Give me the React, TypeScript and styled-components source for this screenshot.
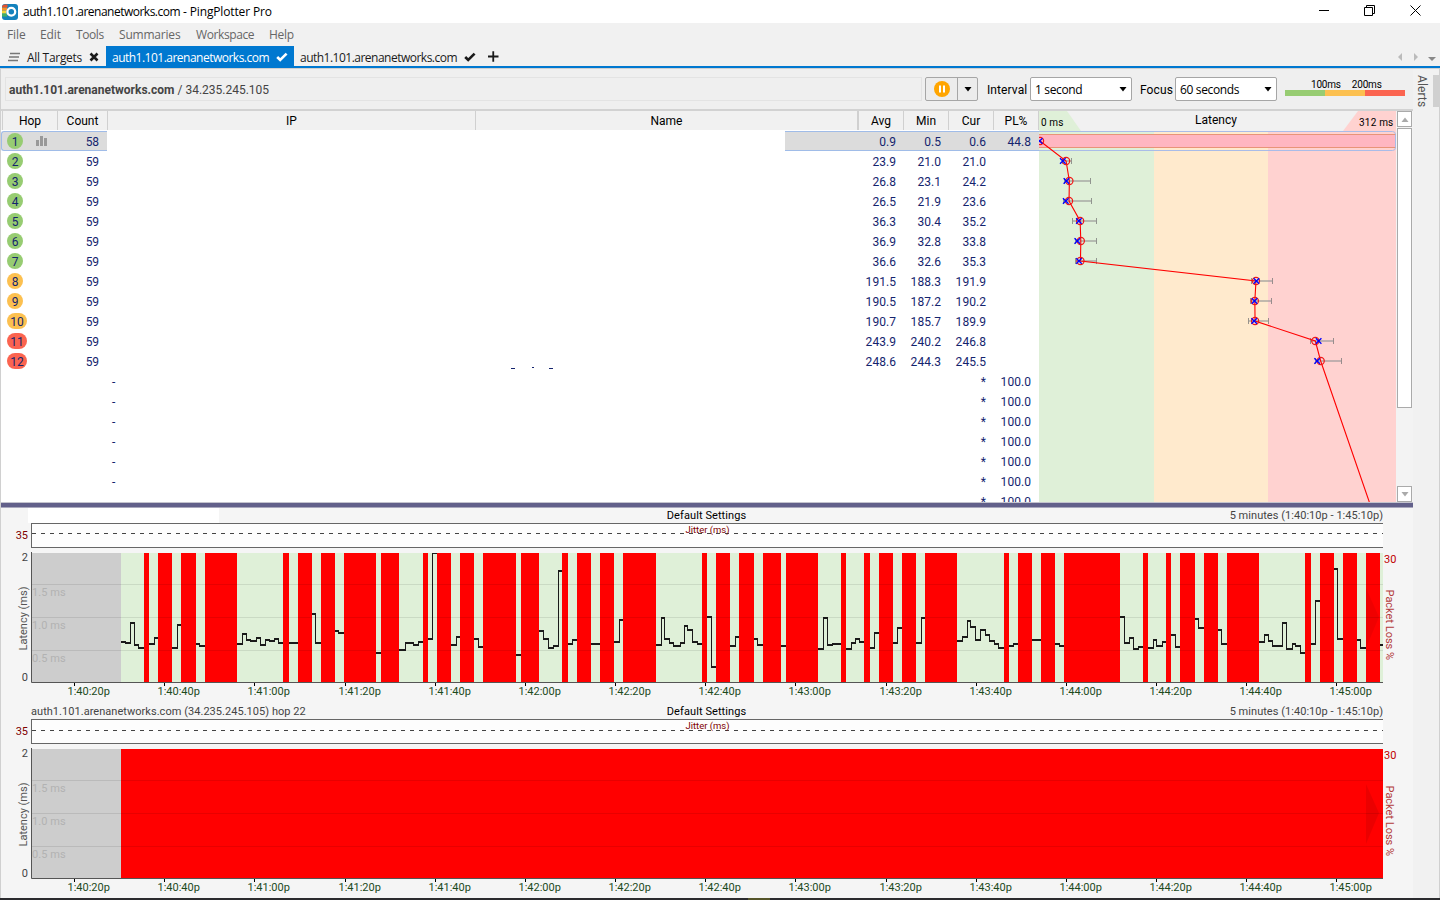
import { Fragment } from "react";
import styled, { createGlobalStyle } from "styled-components";

const GlobalStyle = createGlobalStyle`
  * {
    box-sizing: border-box;
  }
  body {
    margin: 0;
    overflow: hidden;
    font-family: Roboto, sans-serif;
    font-size: 12px;
    color: #000;
  }
  svg {
    display: block;
  }
`;

const Window = styled.div`
  width: 1440px;
  height: 900px;
  display: flex;
  flex-direction: column;
  background: #f1f1f1;
`;

const TitleBar = styled.div`
  height: 23px;
  display: flex;
  align-items: center;
  background: #fff;
  padding-left: 2px;
`;

const TitleText = styled.div`
  flex: 1;
  margin-left: 5px;
  font-family: "Open Sans", sans-serif;
  font-size: 12px;
  letter-spacing: -0.14px;
  line-height: 23px;
`;

const HostName = styled.span`
  letter-spacing: -0.51px;
`;

const WindowButtons = styled.div`
  display: flex;
  gap: 35px;
  padding: 0 19px 2px 0;
`;

const MenuBar = styled.div`
  height: 23px;
  display: flex;
  padding-left: 7px;
  font-family: "Open Sans", sans-serif;
  color: #666;
  line-height: 23px;
`;

const MenuItem = styled.div<{ $width: number; $spacing?: number }>`
  width: ${(p) => p.$width}px;
  letter-spacing: ${(p) => p.$spacing ?? -0.1}px;
`;

const TabBar = styled.div`
  height: 22px;
  display: flex;
  border-bottom: 2px solid #0078d0;
  font-family: "Open Sans", sans-serif;
  color: #1a1a1a;
`;

const Tab = styled.div<{ $width: number; $active?: boolean }>`
  width: ${(p) => p.$width}px;
  display: flex;
  align-items: center;
  justify-content: space-between;
  padding: 2px 6px 0;
  letter-spacing: -0.3px;
  white-space: nowrap;
  color: ${(p) => (p.$active ? "#fff" : "#1a1a1a")};
  background: ${(p) => (p.$active ? "#0078d0" : "transparent")};
`;

const TabArrows = styled.div`
  margin-left: auto;
  padding: 5px 3px 0 0;
`;

const Body = styled.div`
  height: 830px;
  display: flex;
  border-left: 1px solid #d0d0d0;
  border-top: 1px solid #d0d0d0;
`;

const Main = styled.div`
  width: 1412px;
`;

const SidePanel = styled.div`
  width: 27px;
  display: flex;
  justify-content: space-between;
  border-right: 1px solid #d0d0d0;
  padding-top: 6px;
`;

const AlertsLabel = styled.div`
  width: 17px;
  height: 34px;
  writing-mode: vertical-rl;
  line-height: 17px;
  letter-spacing: 0.1px;
  color: #555;
`;

const SideHandle = styled.div`
  width: 6px;
  height: 32px;
  background: #d0d0d0;
`;

const Toolbar = styled.div`
  height: 40px;
  display: flex;
  align-items: center;
  background: #efefef;
  padding-left: 4px;
`;

const Address = styled.div`
  width: 917px;
  height: 24px;
  border: 1px solid #e3e3e3;
  padding-left: 3px;
  line-height: 25px;
  color: #444;
`;

const SplitButton = styled.div`
  width: 53px;
  height: 24px;
  margin-left: 3px;
  display: flex;
  align-items: center;
  border: 1px solid #a6a6a6;
  border-radius: 2px;
  background: #ececec;
`;

const SplitPart = styled.div<{ $width: number; $divider?: boolean }>`
  width: ${(p) => p.$width}px;
  height: 100%;
  display: flex;
  align-items: center;
  justify-content: center;
  border-left: ${(p) => (p.$divider ? "1px solid #a6a6a6" : "none")};
`;

const FieldLabel = styled.div<{ $width: number }>`
  width: ${(p) => p.$width}px;
  margin-left: ${(p) => 52 - p.$width > 10 ? 8 : 9}px;
  padding-top: 2px;
  letter-spacing: 0.1px;
`;

const Select = styled.div`
  width: 102px;
  height: 24px;
  display: flex;
  align-items: center;
  justify-content: space-between;
  padding: 1px 4px 0;
  background: #fff;
  border: 1px solid #a6a6a6;
  border-radius: 2px;
  font-family: "Open Sans", sans-serif;
  letter-spacing: -0.35px;
`;

const Legend = styled.div`
  width: 120px;
  margin-left: 8px;
  padding-bottom: 3px;
`;

const LegendLabels = styled.div`
  display: flex;
  gap: 11px;
  padding-left: 26px;
  font-size: 10px;
  line-height: 11px;
  letter-spacing: -0.2px;
`;

const LegendBar = styled.div`
  height: 6px;
  background: linear-gradient(to right, #97cc72 0 40px, #fcc050 40px 80px, #fb6450 80px);
`;

const TracePanel = styled.div`
  height: 393px;
  display: flex;
  border-top: 2px solid #d2d2d2;
  overflow: hidden;
  background: #fff;
`;

const Table = styled.div`
  width: 1038px;
`;

const columns = "2px 55px 50px 368px 383px 45px 45px 45px 45px";

const HeaderRow = styled.div`
  height: 19px;
  display: grid;
  grid-template-columns: ${columns};
  margin-bottom: 1px;
`;

const HeaderCell = styled.div<{ $thick?: boolean }>`
  height: 19px;
  text-align: center;
  line-height: 21px;
  background: #f1f1f1;
  border-right: ${(p) => (p.$thick ? "2px solid #d0d0d0" : "1px solid #d0d0d0")};
`;

const Row = styled.div`
  height: 20px;
  display: grid;
  grid-template-columns: 106px 678px 254px;
  color: #14246e;
  line-height: 21px;
`;

const RowSide = styled.div<{ $selected?: boolean; $left?: boolean }>`
  height: 20px;
  display: flex;
  align-items: center;
  background: ${(p) => (p.$selected ? "#dcdcdc" : "#fff")};
  border: 0 solid ${(p) => (p.$selected ? "#a0bce8" : "transparent")};
  border-width: ${(p) => (p.$left ? "1px 0 1px 1px" : "1px 0")};
  border-radius: ${(p) => (p.$left ? "3px 0 0 3px" : "0")};
  padding-left: ${(p) => (p.$left ? 5 : 66)}px;
  padding-right: 8px;
`;

const Hop = styled.div<{ $color: string; $wide: boolean }>`
  width: ${(p) => (p.$wide ? 20 : 16)}px;
  height: 16px;
  border-radius: 8px;
  text-align: center;
  line-height: 19px;
  background: ${(p) => p.$color};
`;

const HistoryIcon = styled.svg`
  margin-left: 13px;
`;

const Count = styled.div`
  margin: 2px 0 0 auto;
  letter-spacing: -0.1px;
`;

const Middle = styled.div`
  padding-left: 5px;
  display: flex;
  height: 20px;
  line-height: 23px;
`;

const NameMarks = styled.svg`
  margin: 15px 0 0 398px;
`;

const Value = styled.div`
  width: 45px;
  margin-top: 2px;
  text-align: right;
  letter-spacing: 0.05px;
`;

const ScrollBar = styled.div`
  width: 17px;
  display: flex;
  flex-direction: column;
  padding: 0 1px;
  background: #f3f3f3;
`;

const ScrollButton = styled.div`
  height: 16px;
  display: flex;
  align-items: center;
  justify-content: center;
  background: #fff;
  border: 1px solid #aaa;
`;

const ScrollThumb = styled.div`
  height: 280px;
  margin: 1px 0 auto;
  background: #fff;
  border: 1px solid #aaa;
`;

const Splitter = styled.div`
  height: 6px;
  background: #62608a;
  border-top: 1px solid #c4c4ce;
  border-bottom: 1px solid #a9a8bd;
`;

const Graphs = styled.div`
  height: 390px;
  background: #f5f5f5;
`;

const Graph = styled.div`
  height: 196px;
`;

const GraphHeader = styled.div`
  height: 15px;
  display: grid;
  grid-template-columns: 191px 1fr 1fr 191px;
  padding: 0 30px 0 27px;
  font-size: 11px;
  line-height: 15px;
  letter-spacing: 0.04px;
  color: #444;
  white-space: nowrap;
`;

const GraphTarget = styled.div<{ $blank: boolean }>`
  padding-left: 3px;
  background: ${(p) => (p.$blank ? "#fff" : "transparent")};
`;

const GraphCaption = styled.div`
  grid-column: 2 / 4;
  text-align: center;
  padding-left: 2px;
  letter-spacing: 0.08px;
  color: #000;
`;

const GraphSpan = styled.div`
  text-align: right;
`;

const PlotText = styled.text`
  font-family: Roboto, sans-serif;
  font-size: 11px;
`;

const Bottom = styled.div`
  flex: 1;
  background: linear-gradient(to right, #2b2b2e 0 748px, #55552a 748px 770px, #2b2b2e 770px);
`;

const GREEN = "#97cc72";
const ORANGE = "#fcc050";
const RED = "#fb6450";

type Trace = {
  count: number;
  avg: number;
  min: number;
  cur: number;
  max: number;
  loss?: string;
};

const traces: Trace[] = [
  { count: 58, avg: 0.9, min: 0.5, cur: 0.6, max: 1, loss: "44.8" },
  { count: 59, avg: 23.9, min: 21.0, cur: 21.0, max: 29.2 },
  { count: 59, avg: 26.8, min: 23.1, cur: 24.2, max: 46.1 },
  { count: 59, avg: 26.5, min: 21.9, cur: 23.6, max: 46.6 },
  { count: 59, avg: 36.3, min: 30.4, cur: 35.2, max: 50.8 },
  { count: 59, avg: 36.9, min: 32.8, cur: 33.8, max: 51.2 },
  { count: 59, avg: 36.6, min: 32.6, cur: 35.3, max: 51.2 },
  { count: 59, avg: 191.5, min: 188.3, cur: 191.9, max: 206.5 },
  { count: 59, avg: 190.5, min: 187.2, cur: 190.2, max: 205.3 },
  { count: 59, avg: 190.7, min: 185.7, cur: 189.9, max: 203.0 },
  { count: 59, avg: 243.9, min: 240.2, cur: 246.8, max: 260.8 },
  { count: 59, avg: 248.6, min: 244.3, cur: 245.5, max: 267.8 },
];

const hopColor = (avg: number) => (avg < 100 ? GREEN : avg < 200 ? ORANGE : RED);
const msToX = (ms: number) => ms * 1.133;

// [start, end] of every packet loss block
const lossBars = [
  [144, 149], [158, 172], [181, 196], [205, 237], [283, 289], [298, 312], [321, 335],
  [344, 376], [381, 399], [423, 428], [437, 451], [460, 474], [483, 516], [521, 539],
  [562, 568], [577, 591], [600, 614], [623, 656], [702, 707], [716, 730], [739, 754],
  [763, 781], [786, 818], [841, 846], [864, 870], [879, 893], [902, 916], [925, 957],
  [1004, 1009], [1018, 1032], [1041, 1055], [1064, 1120], [1143, 1148], [1166, 1171],
  [1180, 1195], [1204, 1218], [1227, 1259], [1305, 1311], [1320, 1334], [1343, 1357],
  [1366, 1380],
];

// step lines between the blocks: x, y, x, y, ..., end x
const steps = [
  [121, 642, 125, 643, 130, 623, 134, 645, 138, 648, 144],
  [149, 644, 154, 638, 158],
  [172, 648, 177, 625, 181],
  [196, 644, 199, 646, 205],
  [237, 644, 242, 634, 246, 640, 250, 641, 256, 638, 260, 645, 265, 640, 269, 641, 274, 639, 278, 643, 283],
  [289, 643, 298],
  [312, 614, 315, 643, 321],
  [335, 631, 338, 633, 344],
  [376, 653, 381],
  [399, 650, 405, 643, 413, 645, 418, 642, 423],
  [428, 639, 432, 553, 437],
  [451, 645, 456, 637, 460],
  [474, 639, 478, 647, 483],
  [516, 655, 521],
  [539, 631, 543, 639, 548, 648, 553, 646, 558, 571, 562],
  [568, 644, 572, 640, 577],
  [591, 644, 600],
  [614, 642, 619, 620, 623],
  [656, 645, 661, 618, 664, 639, 669, 643, 673, 646, 680, 643, 684, 626, 687, 630, 692, 642, 697, 644, 702],
  [707, 617, 711, 667, 716],
  [730, 646, 735, 637, 739],
  [754, 639, 757, 645, 763],
  [781, 646, 786],
  [818, 649, 823, 618, 827, 645, 832, 644, 841],
  [846, 649, 851, 643, 855, 639, 859, 642, 864],
  [870, 648, 874, 633, 879],
  [893, 643, 897, 628, 902],
  [916, 643, 921, 618, 925],
  [957, 641, 962, 637, 967, 621, 970, 627, 975, 640, 980, 630, 985, 635, 989, 641, 994, 644, 998, 648, 1004],
  [1009, 646, 1013, 644, 1018],
  [1032, 640, 1041],
  [1055, 644, 1059, 646, 1064],
  [1120, 617, 1124, 643, 1129, 638, 1133, 649, 1138, 647, 1143],
  [1148, 648, 1153, 640, 1156, 646, 1162, 642, 1166],
  [1171, 635, 1175, 647, 1180],
  [1195, 619, 1198, 628, 1204],
  [1218, 630, 1221, 644, 1227],
  [1259, 642, 1264, 635, 1268, 641, 1272, 646, 1282, 623, 1286, 649, 1292, 644, 1295, 646, 1300, 653, 1305],
  [1311, 644, 1315, 601, 1320],
  [1334, 569, 1337, 639, 1343],
  [1357, 640, 1360, 648, 1366],
  [1380, 645, 1383],
];

const stepPaths = (list: number[][]) => {
  let flat = "";
  let rise = "";
  list.forEach((s) => {
    for (let i = 0; i + 2 < s.length; i += 2) {
      flat += `M${s[i]} ${s[i + 1]}H${s[i + 2] + (i + 3 < s.length ? 1 : 0)}`;
      if (i + 3 < s.length) {
        rise += `M${s[i + 2] + 0.5} ${s[i + 1]}V${s[i + 3]}`;
      }
    }
  });
  return { flat, rise };
};

const times = [
  "1:40:20p", "1:40:40p", "1:41:00p", "1:41:20p", "1:41:40p", "1:42:00p", "1:42:20p", "1:42:40p",
  "1:43:00p", "1:43:20p", "1:43:40p", "1:44:00p", "1:44:20p", "1:44:40p", "1:45:00p",
];

const Logo = () => (
  <svg width="16" height="16" viewBox="0 0 16 16">
    <rect width="16" height="16" rx="3" fill="#1482bd" />
    <path d="M0 3.600A3 3 0 0 1 3 .6h2.500v3H0z" fill="#e8532f" />
    <path d="M0 3.600h5v3H0z" fill="#f6922c" />
    <path d="M0 6.600h4v3H0z" fill="#f3d53c" />
    <path d="M0 9.600h5v3H0z" fill="#3fae6a" />
    <circle cx="9.300" cy="7.800" r="3.900" fill="#1482bd" stroke="#fff" strokeWidth="2.300" />
  </svg>
);

const Caret = ({ up, color = "#000" }: { up?: boolean; color?: string }) => (
  <svg width="8" height="5" viewBox="0 0 8 5">
    <path d={up ? "M.5 5L4 0.5L7.5 5z" : "M.5 0H7.5L4 4.6z"} fill={color} />
  </svg>
);

const Check = ({ color }: { color: string }) => (
  <svg width="12" height="10" viewBox="0 0 12 10">
    <path d="M1.2 5L4.2 8L10.6 1.6" fill="none" stroke={color} strokeWidth="2.6" />
  </svg>
);

const LatencyChart = () => {
  const line = traces.map((t, i) => `${msToX(t.avg)},${30 + i * 20}`).join(" ");
  return (
    <svg width="357" height="391" viewBox="0 0 357 391">
      <rect width="357" height="20" fill="#f1f1f1" />
      <path d="M0 0H28L42 20H0z" fill="#dff0d8" />
      <path d="M357 0H319L304 20H357z" fill="#ffd2d0" />
      <rect y="20" width="115" height="371" fill="#dff0d8" />
      <rect x="115" y="20" width="114" height="371" fill="#ffeacd" />
      <rect x="229" y="20" width="128" height="371" fill="#ffd2d0" />
      <text x="2" y="15" fontSize="10" letterSpacing="0.1">0 ms</text>
      <text x="156" y="13" fontSize="12">Latency</text>
      <text x="320" y="15" fontSize="10" letterSpacing="0.2">312 ms</text>
      <rect x="0" y="23.5" width="357" height="13" fill="#ffb6c1" />
      <path d="M0 23.5H357M0 36.5H357" stroke="#e89478" />
      <path d="M0 20.5H353.5Q356.500 20.500 356.500 23.500V36.500Q356.500 39.500 353.500 39.500H0" fill="none" stroke="#a9bce8" />
      {traces.slice(1).map((t, i) => {
        const y = 50 + i * 20;
        const a = Math.round(msToX(t.min));
        const b = Math.round(msToX(t.max));
        return (
          <g key={y} stroke="#777" opacity="0.75">
            <path d={`M${a} ${y}H${b}`} strokeWidth="1.6" stroke="#999" />
            <path d={`M${a - 0.5} ${y - 3}V${y + 3}M${b - 0.5} ${y - 3}V${y + 3}`} />
          </g>
        );
      })}
      <polyline points={`${line} 330.300,391`} fill="none" stroke="#f00" strokeWidth="1.1" />
      {traces.map((t, i) => {
        const y = 30 + i * 20;
        const c = msToX(t.cur);
        return (
          <Fragment key={y}>
            <circle cx={msToX(t.avg)} cy={y} r="3.6" fill="none" stroke="#f01818" strokeWidth="1.2" />
            <path d={`M${c - 2.8} ${y - 2.8}L${c + 2.8} ${y + 2.8}M${c + 2.8} ${y - 2.8}L${c - 2.8} ${y + 2.8}`} stroke="#00f" strokeWidth="1.3" />
          </Fragment>
        );
      })}
    </svg>
  );
};

const TimePlot = ({ solid }: { solid?: boolean }) => {
  const { flat, rise } = stepPaths(steps);
  const dashY = solid ? 534.5 : 533.5;
  return (
    <svg width="1412" height="181" viewBox="1 523 1412 181">
      <rect x="31.500" y="523.500" width="1360" height="24" fill="#fdfdfd" stroke="#666" />
      <rect x="1383" y="522" width="30" height="28" fill="#f5f5f5" />
      <path d={`M32 ${dashY}H1383`} stroke="#444" strokeDasharray="4 5" />
      <PlotText x="707.500" y="533" textAnchor="middle" fill="#800000" style={{ fontSize: 9.5 }}>Jitter (ms)</PlotText>
      <PlotText x="28" y="539" textAnchor="end" fill="#800000">35</PlotText>
      <rect x="32" y="553" width="89" height="129" fill="#cdcdcd" />
      <rect x="121" y="553" width="1262" height="129" fill={solid ? "#f00" : "#dff0d8"} />
      {!solid && (
        <g shapeRendering="crispEdges">
          <path d={flat} stroke="#1a1a1a" strokeWidth="2" />
          <path d={rise} stroke="#1a1a1a" />
          <rect x="432" y="551" width="6" height="2" fill="#f5f5f5" />
          {lossBars.map(([a, b]) => (
            <rect key={a} x={a} y="553" width={b - a} height="129" fill="#f00" />
          ))}
        </g>
      )}
      <path d="M32 584.500H1383M32 617.500H1383M32 650.500H1383" stroke="#000" strokeOpacity="0.09" />
      <path d="M1366 588L1379 617L1366 648z" fill="#000" fillOpacity={solid ? 0.08 : 0.06} />
      <path d="M31.500 552V682.500H1383" fill="none" stroke="#555" />
      {["1.5 ms", "1.0 ms", "0.5 ms"].map((label, i) => (
        <PlotText key={label} x="32" y={596 + i * 33} fill="#b2b2b2" letterSpacing="0.05">{label}</PlotText>
      ))}
      <PlotText x="28" y="561" textAnchor="end" fill="#444">2</PlotText>
      <PlotText x="28" y="681" textAnchor="end" fill="#444">0</PlotText>
      <PlotText transform="translate(27 650.500) rotate(-90)" fill="#555">Latency (ms)</PlotText>
      <PlotText x="1384" y="563" fill="#c00000">30</PlotText>
      <PlotText transform="translate(1386 589.500) rotate(90)" fill="#b33a3a">Packet Loss %</PlotText>
      {times.map((t, i) => {
        const x = Math.round(74 + i * 90.17);
        return (
          <Fragment key={t}>
            <path d={`M${x + 0.5} 683V686`} stroke="#000" />
            <PlotText x={x - 6.5} y="695" fill="#1c4a1c">{t}</PlotText>
          </Fragment>
        );
      })}
    </svg>
  );
};

const App = () => {
  return (
    <>
      <GlobalStyle />
      <Window>
        <TitleBar>
          <Logo />
          <TitleText>
            <HostName>auth1.101.arenanetworks.com</HostName> - PingPlotter Pro
          </TitleText>
          <WindowButtons>
            <svg width="11" height="11" viewBox="0 0 11 11">
              <path d="M1 5.500H11" stroke="#000" />
            </svg>
            <svg width="11" height="11" viewBox="0 0 11 11" fill="none" stroke="#000">
              <path d="M.5 2.500H8.500V10.500H.5zM2.500 2.500V.5H10.500V8.500H8.500" />
            </svg>
            <svg width="11" height="11" viewBox="0 0 11 11" stroke="#000">
              <path d="M.5 .5L10.500 10.500M10.500 .5L.5 10.500" />
            </svg>
          </WindowButtons>
        </TitleBar>
        <MenuBar>
          <MenuItem $width={33}>File</MenuItem>
          <MenuItem $width={36}>Edit</MenuItem>
          <MenuItem $width={43} $spacing={-0.4}>Tools</MenuItem>
          <MenuItem $width={77} $spacing={-0.2}>Summaries</MenuItem>
          <MenuItem $width={73} $spacing={-0.4}>Workspace</MenuItem>
          <MenuItem $width={40} $spacing={-0.3}>Help</MenuItem>
        </MenuBar>
        <TabBar>
          <Tab $width={106}>
            <svg width="14" height="10" viewBox="0 0 14 10" stroke="#777" strokeWidth="1.500">
              <path d="M4 1.500H14M3 5H13M2 8.500H12" />
            </svg>
            All Targets
            <svg width="11" height="10" viewBox="0 0 11 10" stroke="#1a1a1a" strokeWidth="2.600">
              <path d="M1.500 1.500L8.500 8.500M8.500 1.500L1.500 8.500" />
            </svg>
          </Tab>
          <Tab $width={188} $active>
            <HostName>auth1.101.arenanetworks.com</HostName>
            <Check color="#fff" />
          </Tab>
          <Tab $width={188}>
            <HostName>auth1.101.arenanetworks.com</HostName>
            <Check color="#1a1a1a" />
          </Tab>
          <Tab $width={24}>
            <svg width="11" height="16" viewBox="0 0 11 16" stroke="#1a1a1a" strokeWidth="1.800">
              <path d="M0 7.500H10.500M5.250 2.300V12.700" />
            </svg>
          </Tab>
          <TabArrows>
            <svg width="40" height="12" viewBox="0 0 40 12">
              <path d="M5 2V10L1 6z" fill="#bbb" />
              <path d="M17 2V10L21 6z" fill="#bbb" />
              <path d="M31 6H39L35 10z" fill="#888" />
            </svg>
          </TabArrows>
        </TabBar>
        <Body>
          <Main>
            <Toolbar>
              <Address>
                <b>auth1.101.arenanetworks.com</b> / 34.235.245.105
              </Address>
              <SplitButton>
                <SplitPart $width={31}>
                  <svg width="16" height="16" viewBox="0 0 16 16">
                    <circle cx="8" cy="8" r="8" fill="#ffa500" />
                    <path d="M6 4.500V11.500M10 4.500V11.500" stroke="#fff" strokeWidth="2" />
                  </svg>
                </SplitPart>
                <SplitPart $width={20} $divider>
                  <Caret />
                </SplitPart>
              </SplitButton>
              <FieldLabel $width={43}>Interval</FieldLabel>
              <Select>
                1 second
                <Caret />
              </Select>
              <FieldLabel $width={35}>Focus</FieldLabel>
              <Select>
                60 seconds
                <Caret />
              </Select>
              <Legend>
                <LegendLabels>
                  <div>100ms</div>
                  <div>200ms</div>
                </LegendLabels>
                <LegendBar />
              </Legend>
            </Toolbar>
            <TracePanel>
              <Table>
                <HeaderRow>
                  <HeaderCell />
                  <HeaderCell>Hop</HeaderCell>
                  <HeaderCell>Count</HeaderCell>
                  <HeaderCell>IP</HeaderCell>
                  <HeaderCell $thick>Name</HeaderCell>
                  <HeaderCell>Avg</HeaderCell>
                  <HeaderCell>Min</HeaderCell>
                  <HeaderCell>Cur</HeaderCell>
                  <HeaderCell>PL%</HeaderCell>
                </HeaderRow>
                {traces.map((t, i) => (
                  <Row key={i}>
                    <RowSide $left $selected={i === 0}>
                      <Hop $color={hopColor(t.avg)} $wide={i > 8}>
                        {i + 1}
                      </Hop>
                      {i === 0 && (
                        <HistoryIcon width="12" height="10" viewBox="0 0 12 10" fill="#999">
                          <path d="M0 4H3V10H0zM4 0H7V10H4zM8 2H11V10H8z" />
                        </HistoryIcon>
                      )}
                      <Count>{t.count}</Count>
                    </RowSide>
                    <Middle>
                      {i === 11 && (
                        <NameMarks width="44" height="3" viewBox="0 0 44 3">
                          <path d="M1 2.500H5M22 1.500H24M39 2.500H43" stroke="#14246e" />
                        </NameMarks>
                      )}
                    </Middle>
                    <RowSide $selected={i === 0}>
                      <Value>{t.avg.toFixed(1)}</Value>
                      <Value>{t.min.toFixed(1)}</Value>
                      <Value>{t.cur.toFixed(1)}</Value>
                      <Value>{t.loss}</Value>
                    </RowSide>
                  </Row>
                ))}
                {[0, 1, 2, 3, 4, 5, 6].map((i) => (
                  <Row key={i}>
                    <RowSide $left />
                    <Middle>-</Middle>
                    <RowSide>
                      <Value />
                      <Value />
                      <Value>*</Value>
                      <Value>100.0</Value>
                    </RowSide>
                  </Row>
                ))}
              </Table>
              <LatencyChart />
              <ScrollBar>
                <ScrollButton>
                  <Caret up color="#aaa" />
                </ScrollButton>
                <ScrollThumb />
                <ScrollButton>
                  <Caret color="#aaa" />
                </ScrollButton>
              </ScrollBar>
            </TracePanel>
            <Splitter />
            <Graphs>
              {["", "auth1.101.arenanetworks.com (34.235.245.105) hop 22"].map((target) => (
                <Graph key={target}>
                  <GraphHeader>
                    <GraphTarget $blank={!target}>{target}</GraphTarget>
                    <GraphCaption>Default Settings</GraphCaption>
                    <GraphSpan>5 minutes (1:40:10p - 1:45:10p)</GraphSpan>
                  </GraphHeader>
                  <TimePlot solid={!!target} />
                </Graph>
              ))}
            </Graphs>
          </Main>
          <SidePanel>
            <AlertsLabel>Alerts</AlertsLabel>
            <SideHandle />
          </SidePanel>
        </Body>
        <Bottom />
      </Window>
    </>
  );
};

export default App;
